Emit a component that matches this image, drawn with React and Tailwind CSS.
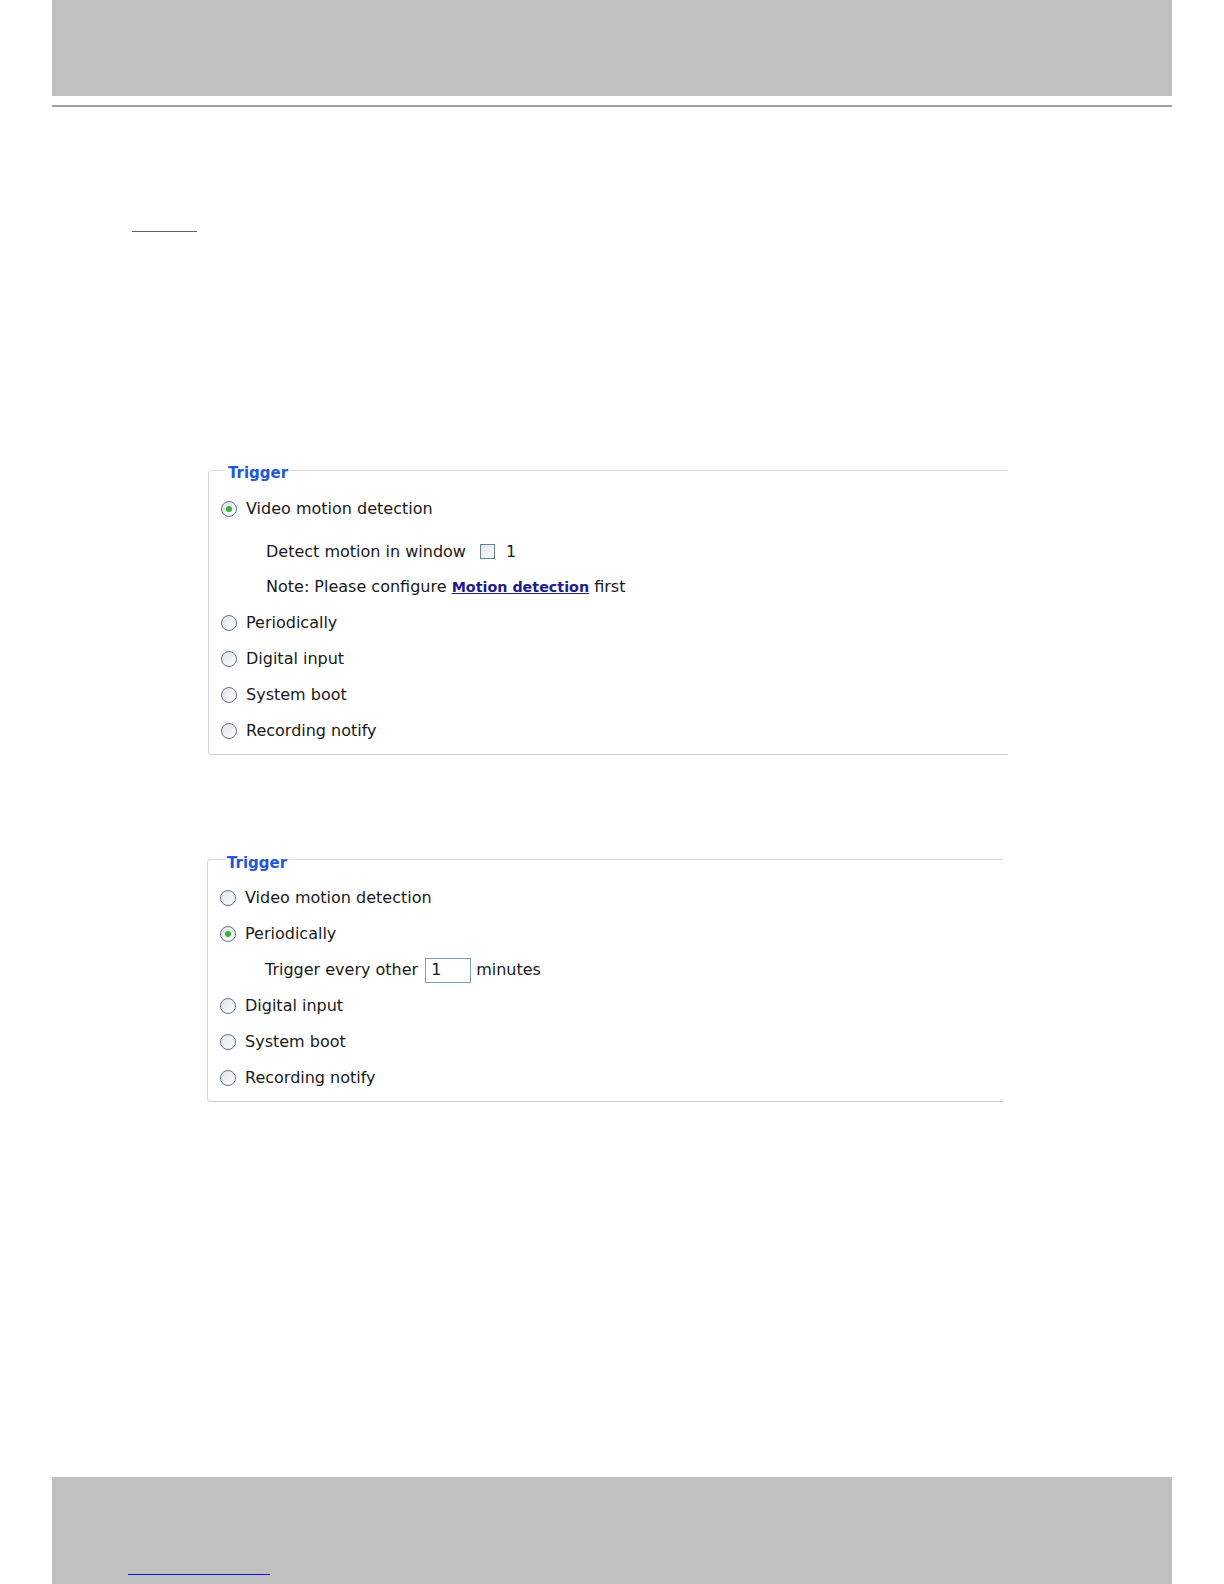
import React from "react";

const Radio = ({ checked }) => (
  <span className="flex h-[16px] w-[16px] shrink-0 items-center justify-center rounded-full border border-[#5f768d] bg-gradient-to-br from-[#dfe3e8] to-white">
    {checked && <span className="h-[6px] w-[6px] rounded-full bg-[#2fb52f]" />}
  </span>
);

const RadioRow = ({ label, checked }) => (
  <div className="flex h-[36px] items-center gap-[9px] pl-[12px]">
    <Radio checked={checked} />
    <span>{label}</span>
  </div>
);

const SubRow = ({ children, className = "" }) => (
  <div className={`flex h-[36px] items-center pl-[57px] ${className}`}>{children}</div>
);

const TriggerBox = ({ className = "", children }) => (
  <fieldset
    className={`rounded-l-[4px] border border-r-0 border-t-[#dcdccc] border-l-[#d4d4d4] border-b-[#d0d0d0] pb-[5px] ${className}`}
  >
    <legend className="ml-[17px] px-[2px] pt-[6px] text-[15px] font-bold text-[#2458d6]">
      Trigger
    </legend>
    <div className="mt-[6px] flex flex-col">{children}</div>
  </fieldset>
);

export default function App() {
  return (
    <div
      className="flex h-[1584px] w-[1224px] flex-col bg-white text-[16px] text-[#191919]"
      style={{ fontFamily: '"DejaVu Sans", Verdana, sans-serif' }}
    >
      {/* page header band */}
      <div className="mx-[52px] h-[96px] bg-[#c0c0c0]" />
      <div className="mx-[52px] mt-[9px] h-[2px] bg-[#a0a0a0]" />
      <div className="ml-[132px] mt-[124px] h-[1px] w-[65px] bg-[#606060]" />

      {/* video motion detection selected */}
      <TriggerBox className="ml-[208px] mt-[224px] w-[800px]">
        <RadioRow label="Video motion detection" checked />
        <SubRow className="mt-[7px]">
          <span>Detect motion in window</span>
          <span className="ml-[14px] h-[15px] w-[15px] border border-[#6a8096] bg-gradient-to-br from-[#dfe3e8] to-white" />
          <span className="ml-[11px]">1</span>
        </SubRow>
        <SubRow className="-mt-px">
          <span>
            Note: Please configure{" "}
            <a className="text-[14.3px] font-bold text-[#1c1c8c] underline" href="#">
              Motion detection
            </a>{" "}
            first
          </span>
        </SubRow>
        <RadioRow label="Periodically" />
        <RadioRow label="Digital input" />
        <RadioRow label="System boot" />
        <RadioRow label="Recording notify" />
      </TriggerBox>

      {/* periodically selected */}
      <TriggerBox className="ml-[207px] mt-[91px] w-[796px]">
        <RadioRow label="Video motion detection" />
        <RadioRow label="Periodically" checked />
        <SubRow className="pl-[56px]">
          <span>Trigger every other</span>
          <span className="ml-[7px] mr-[5px] flex h-[25px] w-[46px] items-center border border-[#7f9db9] bg-white pl-[5px]">
            1
          </span>
          <span>minutes</span>
        </SubRow>
        <RadioRow label="Digital input" />
        <RadioRow label="System boot" />
        <RadioRow label="Recording notify" />
      </TriggerBox>

      {/* page footer band */}
      <div className="mx-[52px] mt-auto flex h-[107px] items-end bg-[#c0c0c0] pb-[9px]">
        <div className="ml-[76px] h-[1px] w-[142px] bg-[#1010e0]" />
      </div>
    </div>
  );
}
